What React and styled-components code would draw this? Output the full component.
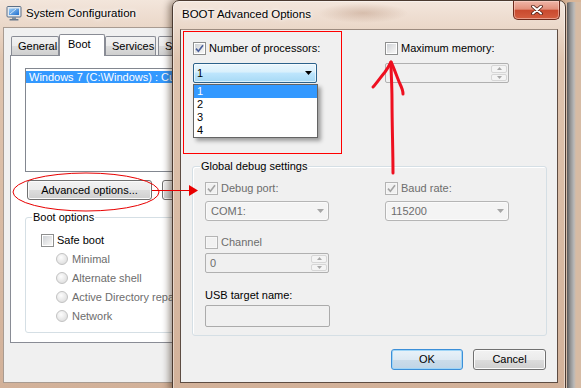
import React from 'react'
import styled, { createGlobalStyle } from 'styled-components'

const GlobalStyle = createGlobalStyle`
  html, body {
    margin: 0;
    padding: 0;
  }
  body {
    width: 581px;
    height: 388px;
    overflow: hidden;
    font-family: "Liberation Sans", Arial, sans-serif;
    font-size: 11px;
    line-height: 13px;
    color: #000;
  }
`

const Desktop = styled.div`
  position: relative;
  width: 581px;
  height: 388px;
  overflow: hidden;
  background: linear-gradient(180deg, #d9b597 0%, #b7845d 100%);
`

// windows sit on a free desktop, so they are placed by coordinates
const Frame = styled.div`
  position: absolute;
  left: ${p => p.$left}px;
  top: ${p => p.$top}px;
  width: ${p => p.$width}px;
  height: ${p => p.$height}px;
  z-index: ${p => p.$z};
  box-sizing: border-box;
  display: flex;
  flex-direction: column;
  padding: 0 7px 7px;
  border: 1px solid ${p => (p.$active ? '#4b3a30' : '#8c7667')};
  border-radius: 7px 7px 0 0;
  background: ${p =>
    p.$active
      ? 'radial-gradient(ellipse 45px 10px at 190px 12px, rgba(150, 100, 70, 0.28), transparent), linear-gradient(180deg, #f3e6dc 0px, #ead7c8 28px, #dfc4ae 60px, #d2b199 100%)'
      : 'linear-gradient(180deg, #f3e6dc 0px, #ead7c8 28px, #dfc4ae 60px, #d2b199 100%)'};
  box-shadow: ${p =>
    p.$active
      ? '-3px 0 7px rgba(40, 20, 0, 0.45), inset 0 0 0 1px rgba(255, 255, 255, 0.45)'
      : 'inset 0 0 0 1px rgba(255, 255, 255, 0.35)'};
`

const FarWindow = styled.div`
  position: absolute;
  left: 564px;
  top: 2px;
  width: 40px;
  height: 400px;
  z-index: 0;
  border-radius: 6px 0 0 0;
  background: linear-gradient(90deg, #6d5a4c 0, #6d5a4c 1px, #e3cbb8 1px, #e3cbb8 3px, #5e5e5e 3px, #8f8f8f 6px, #b9b9b9 10px, #d6bba4 12px, #d6bba4 100%);
`

const TitleBar = styled.div`
  height: 28px;
  flex: none;
  display: flex;
  align-items: center;
  gap: 4px;
  padding-left: ${p => p.$pad}px;
`

const TitleText = styled.span`
  font-size: 11.5px;
  line-height: 14px;
  margin-top: ${p => (p.$up ? -2 : 0)}px;
  color: #000;
  text-shadow: 0 0 6px #fff, 0 0 3px #fff;
  flex: 1;
`

const CloseButton = styled.div`
  align-self: flex-start;
  width: 47px;
  height: 19px;
  margin-right: -2px;
  box-sizing: border-box;
  display: flex;
  align-items: center;
  justify-content: center;
  border: 1px solid #6e2a1c;
  border-top: none;
  border-radius: 0 0 5px 5px;
  background: linear-gradient(180deg, #efb6a8 0%, #e2907b 45%, #c94a2f 52%, #d45e40 100%);
  box-shadow: inset 0 0 0 1px rgba(255, 220, 210, 0.5);
`

const BackClient = styled.div`
  flex: 1;
  display: flex;
  flex-direction: column;
  padding-top: 6px;
  background: #f0f0f0;
  border: 1px solid #a89b91;
`

const TabStrip = styled.div`
  display: flex;
  align-items: flex-end;
  height: 21px;
  padding-left: 7px;
`

const Tab = styled.div`
  position: relative;
  z-index: ${p => (p.$active ? 2 : 0)};
  box-sizing: border-box;
  width: ${p => p.$w}px;
  height: ${p => (p.$active ? 22 : 19)}px;
  margin-bottom: ${p => (p.$active ? -1 : 0)}px;
  margin-left: ${p => (p.$gap ? 2 : 0)}px;
  display: flex;
  align-items: ${p => (p.$active ? 'flex-start' : 'center')};
  padding: ${p => (p.$active ? '3px 0 0 8px' : '0 0 0 6px')};
  border: 1px solid #898c95;
  border-bottom: none;
  border-radius: 2px 2px 0 0;
  background: ${p =>
    p.$active ? '#ffffff' : 'linear-gradient(180deg, #f2f2f2 0%, #ebebeb 50%, #dddddd 51%, #cfcfcf 100%)'};
  white-space: nowrap;
  overflow: hidden;
`

const TabPanel = styled.div`
  box-sizing: border-box;
  width: 250px;
  height: 288px;
  margin-left: 6px;
  padding: 12px 0 0 14px;
  background: #ffffff;
  border: 1px solid #898c95;
`

const ListBox = styled.div`
  box-sizing: border-box;
  width: 220px;
  height: 104px;
  padding-top: 2px;
  border: 1px solid #828790;
  background: #fff;
`

const ListItem = styled.div`
  height: 12px;
  line-height: 12px;
  padding-left: 3px;
  white-space: nowrap;
  background: ${p => (p.$selected ? '#3399ff' : 'transparent')};
  color: ${p => (p.$selected ? '#fff' : '#000')};
`

const ButtonRow = styled.div`
  display: flex;
  gap: 10px;
  margin-left: 2px;
  justify-content: ${p => (p.$end ? 'flex-end' : 'flex-start')};
  align-self: ${p => (p.$end ? 'flex-end' : 'auto')};
  margin-top: ${p => (p.$end ? 'auto' : '8px')};
`

const Button = styled.div`
  box-sizing: border-box;
  width: ${p => p.$w}px;
  height: ${p => p.$h}px;
  flex: none;
  display: flex;
  align-items: center;
  justify-content: center;
  white-space: nowrap;
  overflow: hidden;
  border: 1px solid ${p => (p.$default ? '#3c8fd8' : '#707070')};
  border-radius: 3px;
  background: ${p =>
    p.$default
      ? 'linear-gradient(180deg, #e8f2f9 0%, #dde9f3 50%, #cbdcea 51%, #c0d5e6 100%)'
      : 'linear-gradient(180deg, #f2f2f2 0%, #ebebeb 50%, #dddddd 51%, #cfcfcf 100%)'};
  box-shadow: inset 0 0 0 1px ${p => (p.$default ? '#9fd5f7' : '#fbfbfb')};
`

const GroupBox = styled.div`
  position: relative;
  box-sizing: border-box;
  width: ${p => p.$w}px;
  margin-top: ${p => p.$mt}px;
  padding: ${p => p.$pad};
  border: 1px solid #d5dfe5;
  border-radius: 3px;
  box-shadow: inset 1px 1px 0 #ffffff;
  display: flex;
  flex-direction: column;
`

const GroupTitle = styled.span`
  position: absolute;
  top: -7px;
  left: ${p => p.$x}px;
  padding: 0 1px;
  line-height: 13px;
  background: ${p => p.$bg};
  color: #000;
`

const CheckRow = styled.div`
  display: flex;
  align-items: center;
  gap: 3px;
  height: 13px;
  white-space: nowrap;
  color: ${p => (p.$muted ? '#6d6d6d' : '#000')};
`

const Box = styled.span`
  box-sizing: border-box;
  width: 13px;
  height: 13px;
  flex: none;
  display: flex;
  align-items: center;
  justify-content: center;
  border: 1px solid ${p => (p.$disabled ? '#b4b4b4' : '#8e8f8f')};
  background: ${p =>
    p.$disabled ? '#f1f1f1' : 'linear-gradient(135deg, #c9cdd2 0%, #eeeeee 70%, #fafafa 100%)'};
  box-shadow: inset 0 0 0 1px ${p => (p.$disabled ? '#f7f7f7' : '#ffffff')};
`

const RadioList = styled.div`
  display: flex;
  flex-direction: column;
  gap: 7px;
  margin-top: 6px;
  padding-left: 15px;
`

const RadioRow = styled.div`
  display: flex;
  align-items: center;
  gap: 4px;
  height: 12px;
  color: #6d6d6d;
  white-space: nowrap;
`

const RadioDot = styled.span`
  box-sizing: border-box;
  width: 12px;
  height: 12px;
  flex: none;
  border-radius: 50%;
  border: 1px solid #c2c2c2;
  background: radial-gradient(circle at 40% 35%, #fdfdfd 0%, #ececec 45%, #d6d6d6 100%);
`

const DialogClient = styled.div`
  flex: 1;
  display: flex;
  flex-direction: column;
  box-sizing: border-box;
  padding: 12px 11px 12px 11px;
  background: #f0f0f0;
  border: 1px solid #5d4c42;
  border-top-color: #9c8b7f;
`

const TopGrid = styled.div`
  display: grid;
  grid-template-columns: 124px 124px;
  grid-template-rows: 13px 20px;
  column-gap: 68px;
  row-gap: 8px;
  margin-left: 1px;
`

const ComboWrap = styled.div`
  position: relative;
`

const Combo = styled.div`
  box-sizing: border-box;
  width: ${p => p.$w}px;
  height: 20px;
  display: flex;
  align-items: center;
  justify-content: space-between;
  padding: 0 4px 0 ${p => (p.$open ? 3 : 5)}px;
  border: 1px solid ${p => (p.$open ? '#2c628b' : '#b5b5b5')};
  border-radius: ${p => (p.$open ? 2 : 3)}px;
  color: ${p => (p.$open ? '#000' : '#6d6d6d')};
  background: ${p =>
    p.$open
      ? 'linear-gradient(180deg, #eaf6fd 0%, #d9f0fc 45%, #bee6fd 50%, #a7d9f5 100%)'
      : '#f4f4f4'};
  box-shadow: inset 0 0 0 1px ${p => (p.$open ? 'rgba(255,255,255,0.6)' : '#fafafa')};
`

const Arrow = ({ color }) => (
  <svg width="7" height="4" viewBox="0 0 7 4">
    <path d="M0 0H7L3.5 4Z" fill={color} />
  </svg>
)

// popup list of the open combo box, lies over the dialog
const DropList = styled.div`
  position: absolute;
  left: 0;
  top: 21px;
  z-index: 5;
  box-sizing: border-box;
  width: 125px;
  border: 1px solid #646464;
  background: #fff;
  box-shadow: 3px 3px 4px rgba(0, 0, 0, 0.35);
`

const DropItem = styled.div`
  height: 13px;
  line-height: 13px;
  padding-left: 3px;
  background: ${p => (p.$selected ? '#3399ff' : 'transparent')};
  color: ${p => (p.$selected ? '#fff' : '#000')};
`

const SpinBox = styled.div`
  box-sizing: border-box;
  width: 124px;
  height: 20px;
  margin-top: ${p => p.$mt || 0}px;
  display: flex;
  align-items: stretch;
  border: 1px solid #b0b0b0;
  border-radius: 2px;
  background: #f0f0f0;
  color: #6d6d6d;
`

const SpinValue = styled.span`
  flex: 1;
  display: flex;
  align-items: center;
  padding-left: 4px;
`

const SpinButtons = styled.div`
  width: 16px;
  display: flex;
  flex-direction: column;
  gap: 1px;
  padding: 1px 1px 1px 0;
`

const SpinButton = styled.span`
  flex: 1;
  display: flex;
  align-items: center;
  justify-content: center;
  border: 1px solid #d6d6d6;
  border-radius: 2px;
  background: #f4f4f4;
`

const SpinArrow = ({ up }) => (
  <svg width="5" height="3" viewBox="0 0 5 3">
    <path d={up ? 'M0 3H5L2.5 0Z' : 'M0 0H5L2.5 3Z'} fill="#a8a8a8" />
  </svg>
)

const DebugGrid = styled.div`
  display: grid;
  grid-template-columns: 124px 124px;
  grid-template-rows: 13px 20px;
  column-gap: 56px;
  row-gap: 6px;
`

const Stack = styled.div`
  display: flex;
  flex-direction: column;
  margin-top: ${p => p.$mt}px;
`

const FieldLabel = styled.div`
  height: 14px;
  line-height: 14px;
  margin-top: 15px;
`

const TextBox = styled.div`
  box-sizing: border-box;
  width: 125px;
  height: 22px;
  margin-top: 3px;
  border: 1px solid #ababab;
  border-radius: 2px;
  background: #f0f0f0;
`

const Overlay = styled.svg`
  position: absolute;
  left: 0;
  top: 0;
  z-index: 20;
  pointer-events: none;
`

// hand-drawn highlight frame laid over the screenshot
const Highlight = styled.div`
  position: absolute;
  left: 183px;
  top: 31px;
  width: 159px;
  height: 123px;
  box-sizing: border-box;
  border: 1px solid #ff0000;
  z-index: 21;
  pointer-events: none;
`

const Check = ({ checked, disabled, muted, children }) => (
  <CheckRow $muted={muted}>
    <Box $disabled={disabled}>
      {checked && (
        <svg width="9" height="9" viewBox="0 0 9 9">
          <path
            d="M1 4.6 L3.4 7.2 L8 1.2"
            fill="none"
            stroke={disabled ? '#a3a3a3' : '#4a5f9b'}
            strokeWidth="1.6"
          />
        </svg>
      )}
    </Box>
    <span>{children}</span>
  </CheckRow>
)

const Radio = ({ children }) => (
  <RadioRow>
    <RadioDot />
    <span>{children}</span>
  </RadioRow>
)

const AppIcon = () => (
  <svg width="16" height="16" viewBox="0 0 16 16">
    <defs>
      <linearGradient id="scr" x1="0" y1="0" x2="1" y2="1">
        <stop offset="0" stopColor="#9fd0f7" />
        <stop offset="1" stopColor="#1f6fcf" />
      </linearGradient>
    </defs>
    <rect x="1" y="1.5" width="14" height="10.5" rx="1" fill="#e3e9ef" stroke="#5c6f86" />
    <rect x="3" y="3.5" width="10" height="6.5" fill="url(#scr)" />
    <path d="M4 9 L10 4" stroke="#fff" strokeOpacity="0.7" strokeWidth="1" />
    <rect x="6" y="12" width="4" height="2" fill="#8090a0" />
    <rect x="3.5" y="14" width="9" height="1.5" rx="0.5" fill="#66788c" />
  </svg>
)

const CloseGlyph = () => (
  <svg width="12" height="10" viewBox="0 0 12 10">
    <path d="M2 1.5 L10 8.5 M10 1.5 L2 8.5" stroke="#4a1a10" strokeWidth="3.6" strokeLinecap="round" />
    <path d="M2 1.5 L10 8.5 M10 1.5 L2 8.5" stroke="#ffffff" strokeWidth="2" strokeLinecap="round" />
  </svg>
)

const Annotations = () => (
  <Overlay width="581" height="388" viewBox="0 0 581 388">
    <ellipse cx="86" cy="192" rx="73" ry="19" fill="none" stroke="#e80000" strokeWidth="1" />
    <line x1="152" y1="190.5" x2="192" y2="190.5" stroke="#e80000" strokeWidth="1" />
    <path d="M189 185 L198 190.5 L189 196 Z" fill="#e80000" />
    <g fill="none" stroke="#ee1020" strokeWidth="3" strokeLinecap="round" strokeLinejoin="round">
      <path d="M393 173 C393 150 392 125 392 100 C392 85 391 72 391 63" />
      <path d="M373 87 C376 84 380 78 385 72 C388 68 390 64 391 62" />
      <path d="M391 62 C394 68 397 77 400 84 C402 88 403 91 403 94" />
    </g>
  </Overlay>
)

export default function App() {
  return (
    <>
      <GlobalStyle />
      <Desktop>
        <FarWindow />

        <Frame $left={-5} $top={-2} $width={272} $height={393} $z={1}>
          <TitleBar $pad={3}>
            <AppIcon />
            <TitleText>System Configuration</TitleText>
          </TitleBar>
          <BackClient>
            <TabStrip>
              <Tab $w={48}>General</Tab>
              <Tab $w={46} $active>Boot</Tab>
              <Tab $w={51}>Services</Tab>
              <Tab $w={60} $gap>Startup</Tab>
            </TabStrip>
            <TabPanel>
              <ListBox>
                <ListItem $selected>Windows 7 (C:\Windows) : Current OS; Default OS</ListItem>
              </ListBox>
              <ButtonRow>
                <Button $w={125} $h={20}>Advanced options...</Button>
                <Button $w={90} $h={20}>Set as default</Button>
              </ButtonRow>
              <GroupBox $w={220} $mt={17} $pad="16px 0 10px 15px">
                <GroupTitle $x={6} $bg="#ffffff">Boot options</GroupTitle>
                <Check>Safe boot</Check>
                <RadioList>
                  <Radio>Minimal</Radio>
                  <Radio>Alternate shell</Radio>
                  <Radio>Active Directory repair</Radio>
                  <Radio>Network</Radio>
                </RadioList>
              </GroupBox>
            </TabPanel>
          </BackClient>
        </Frame>

        <Frame $left={172} $top={0} $width={394} $height={391} $z={2} $active>
          <TitleBar $pad={2}>
            <TitleText $up>BOOT Advanced Options</TitleText>
            <CloseButton>
              <CloseGlyph />
            </CloseButton>
          </TitleBar>
          <DialogClient>
            <TopGrid>
              <Check checked>Number of processors:</Check>
              <Check>Maximum memory:</Check>
              <ComboWrap>
                <Combo $w={124} $open>
                  <span>1</span>
                  <Arrow color="#000" />
                </Combo>
                <DropList>
                  <DropItem $selected>1</DropItem>
                  <DropItem>2</DropItem>
                  <DropItem>3</DropItem>
                  <DropItem>4</DropItem>
                </DropList>
              </ComboWrap>
              <SpinBox>
                <SpinValue />
                <SpinButtons>
                  <SpinButton><SpinArrow up /></SpinButton>
                  <SpinButton><SpinArrow /></SpinButton>
                </SpinButtons>
              </SpinBox>
            </TopGrid>

            <GroupBox $w={355} $mt={83} $pad="15px 12px 8px 12px">
              <GroupTitle $x={7} $bg="#f0f0f0">Global debug settings</GroupTitle>
              <DebugGrid>
                <Check checked disabled muted>Debug port:</Check>
                <Check checked disabled muted>Baud rate:</Check>
                <Combo $w={124}>
                  <span>COM1:</span>
                  <Arrow color="#a6a6a6" />
                </Combo>
                <Combo $w={124}>
                  <span>115200</span>
                  <Arrow color="#a6a6a6" />
                </Combo>
              </DebugGrid>
              <Stack $mt={15}>
                <Check disabled muted>Channel</Check>
                <SpinBox $mt={4}>
                  <SpinValue>0</SpinValue>
                  <SpinButtons>
                    <SpinButton><SpinArrow up /></SpinButton>
                    <SpinButton><SpinArrow /></SpinButton>
                  </SpinButtons>
                </SpinBox>
                <FieldLabel>USB target name:</FieldLabel>
                <TextBox />
              </Stack>
            </GroupBox>

            <ButtonRow $end>
              <Button $w={72} $h={21} $default>OK</Button>
              <Button $w={73} $h={21}>Cancel</Button>
            </ButtonRow>
          </DialogClient>
        </Frame>

        <Annotations />
        <Highlight />
      </Desktop>
    </>
  )
}
